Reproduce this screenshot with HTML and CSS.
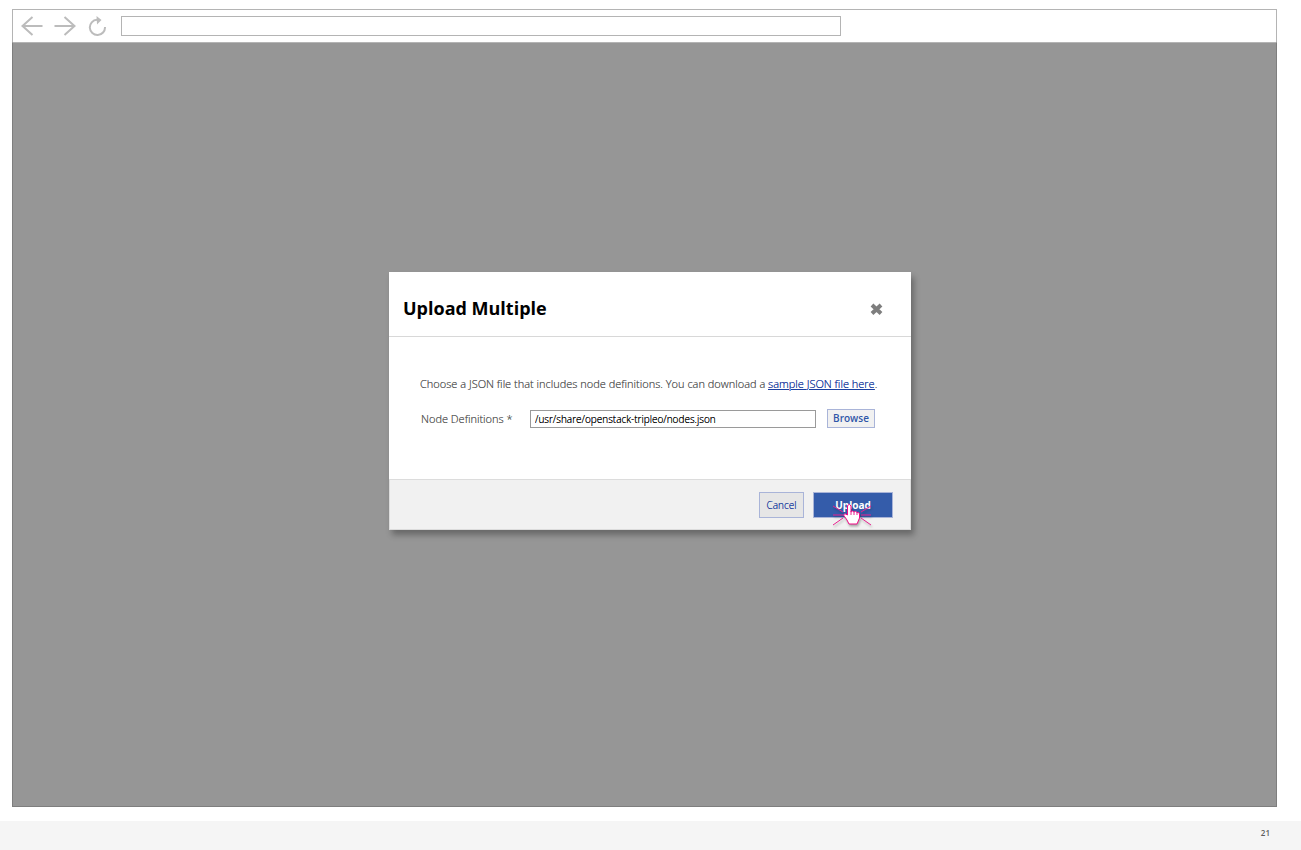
FILE: index.html
```html
<!DOCTYPE html>
<html lang="en">
<head>
<meta charset="utf-8">
<meta name="viewport" content="width=device-width, initial-scale=1">
<title>Upload Multiple</title>
<link rel="stylesheet" href="styles.css">
</head>
<body>
<div class="browser">
  <header class="toolbar">
    <button class="nav" type="button" aria-label="Back">
      <svg width="22" height="20" viewBox="0 0 22 20"><path d="M11.500 1 1.500 10l10 9M1.500 10h20"/></svg>
    </button>
    <button class="nav" type="button" aria-label="Forward">
      <svg width="22" height="20" viewBox="0 0 22 20"><path d="M10.500 1l10 9-10 9M20.500 10H.5"/></svg>
    </button>
    <button class="nav nav-reload" type="button" aria-label="Reload">
      <svg width="20" height="20" viewBox="0 0 20 20"><path d="M10 3.800A7.600 7.600 0 1 0 18 11"/><path class="solid" d="M9.500 0 14.500 4 10 8.500z"/></svg>
    </button>
    <input class="address" type="text" aria-label="Address">
  </header>
  <main class="viewport">
    <section class="modal" role="dialog" aria-labelledby="title">
      <div class="modal-header">
        <h1 class="title" id="title">Upload Multiple</h1>
        <button class="close" type="button" aria-label="Close">
          <svg width="13" height="13" viewBox="0 0 13 13"><path d="M2 3l9 8.500M11 3l-9 8.500"/></svg>
        </button>
      </div>
      <form class="modal-form">
        <div class="modal-body">
          <p class="hint">Choose a JSON file that includes node definitions. You can download a <a class="link" href="#">sample JSON file here</a>.</p>
          <div class="field">
            <label class="label" for="nodes">Node Definitions *</label>
            <input class="path" id="nodes" type="text" value="/usr/share/openstack-tripleo/nodes.json">
            <button class="btn btn-browse" type="button">Browse</button>
          </div>
        </div>
        <div class="modal-footer">
          <button class="btn btn-cancel" type="button">Cancel</button>
          <div class="upload">
            <button class="btn btn-upload" type="button">Upload</button>
            <svg class="pointer" width="40" height="26" viewBox="0 0 40 26" aria-hidden="true">
              <path class="ray" d="M1 4l10 6M1 13h10M1 23l10-7M39 4l-10 6M39 13h-10M39 23l-10-7"/>
              <path class="hand" d="M15.500 3.500Q17.500 1 19 4v6Q20.500 8 22 10 23.500 8.500 25 10.500 27 9.500 27.500 12v4L25 22h-8l-2-4-3.500-5Q12.500 10.500 15.500 13z"/>
              <path class="knuckle" d="M19 9v4M22 10v3M25 10.500V13"/>
            </svg>
          </div>
        </div>
      </form>
    </section>
  </main>
</div>
<footer class="page-footer">21</footer>
</body>
</html>
```
FILE: styles.css
```css
* {
  box-sizing: border-box;
}

body {
  display: flex;
  flex-direction: column;
  min-height: 100vh;
  margin: 0;
  background: #fff;
  font-family: "Open Sans", sans-serif;
  font-size: 11px;
  line-height: 16px;
  color: #5c5c5c;
}

button,
input {
  font: inherit;
}

button {
  cursor: pointer;
}

.browser {
  flex: 1;
  display: flex;
  flex-direction: column;
  margin: 9px 24px 14px 12px;
}

.toolbar {
  display: flex;
  align-items: center;
  gap: 11px;
  height: 33px;
  padding-left: 8px;
  border: 1px solid #b4b4b4;
  border-bottom: 0;
}

.nav,
.close {
  display: flex;
  padding: 0;
  border: 0;
  background: none;
}

.nav svg {
  fill: none;
  stroke: #bcbcbc;
  stroke-width: 2;
}

.nav .solid {
  fill: #bcbcbc;
  stroke: none;
}

.address {
  flex: 0 1 720px;
  min-width: 0;
  height: 20px;
  margin-left: 3px;
  padding: 0 4px;
  border: 1px solid #b4b4b4;
  background: #fff;
}

.viewport {
  flex: 1;
  display: flex;
  justify-content: center;
  align-items: center;
  padding: 0 0 48px 11px;
  border: 1px solid #7e7e7e;
  border-top-color: #b4b4b4;
  background: #969696;
}

.modal {
  width: 522px;
  background: #fff;
  box-shadow: 3px 5px 6px rgba(0, 0, 0, 0.3);
}

.modal-header {
  display: flex;
  justify-content: space-between;
  align-items: center;
  padding: 24px 28px 15px 14px;
  border-bottom: 1px solid #d8d8d8;
}

.title {
  margin: 0;
  font-size: 18px;
  line-height: 25px;
  color: #000;
}

.close svg {
  fill: none;
  stroke: #7e7e7e;
  stroke-width: 4;
}

.modal-body {
  padding: 39px 31px 51px;
}

.hint,
.label,
.path,
.btn-cancel {
  font-weight: 300;
  text-shadow: 0 0 0 currentColor;
}

.hint {
  margin: 0 0 17px;
  white-space: nowrap;
}

.link {
  color: #1c40a0;
}

.field {
  display: flex;
  align-items: flex-end;
}

.label {
  width: 110px;
  padding-left: 1px;
  line-height: 18px;
}

.path {
  width: 286px;
  height: 18px;
  padding: 0 4px;
  border: 1px solid #9a9a9a;
  background: #fff;
  font-size: 10px;
  color: #000;
}

.btn {
  padding: 0 7px;
  border: 1px solid #a9b4d8;
  font-size: 10px;
  color: #2f56a8;
}

.btn-browse {
  width: 48px;
  height: 19px;
  margin-left: 11px;
  padding: 0;
  background: #f1f1f1;
  font-weight: 600;
}

.modal-footer {
  display: flex;
  justify-content: flex-end;
  gap: 9px;
  padding: 12px 17px 11px;
  border: 1px solid #dcdcdc;
  background: #f1f1f1;
}

.btn-cancel {
  width: 45px;
  height: 26px;
  padding: 0;
  background: #e6e6e6;
  color: #1c40a0;
}

.upload {
  position: relative;
}

.btn-upload {
  width: 80px;
  height: 26px;
  background: #345caa;
  font-weight: 700;
  color: #fff;
}

.pointer {
  position: absolute;
  top: 10px;
  left: 19px;
  filter: drop-shadow(1px 2px 1px rgba(0, 0, 0, 0.3));
  pointer-events: none;
}

.ray,
.knuckle {
  fill: none;
  stroke: #e8208e;
}

.hand {
  fill: #fff;
  stroke: #f00a86;
}

.page-footer {
  padding: 4px 31px 9px;
  background: #f5f5f5;
  font-size: 8px;
  font-weight: 600;
  text-align: right;
}
```
